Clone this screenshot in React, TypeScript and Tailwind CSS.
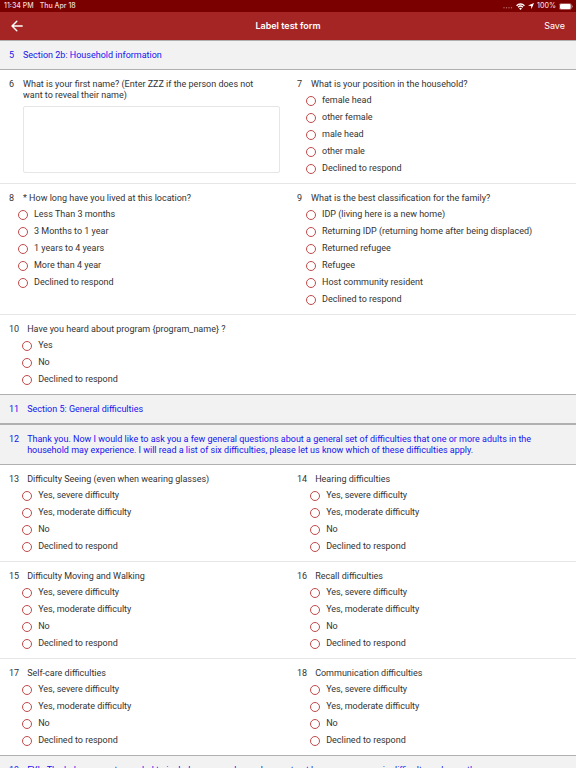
import { useId } from "react";

type Question = { n: number; title: string; options?: string[] };

const difficulty = ["Yes, severe difficulty", "Yes, moderate difficulty", "No", "Declined to respond"];

const household: Question[][] = [
  [
    { n: 6, title: "What is your first name? (Enter ZZZ if the person does not want to reveal their name)" },
    {
      n: 7,
      title: "What is your position in the household?",
      options: ["female head", "other female", "male head", "other male", "Declined to respond"],
    },
  ],
  [
    {
      n: 8,
      title: "* How long have you lived at this location?",
      options: ["Less Than 3 months", "3 Months to 1 year", "1 years to 4 years", "More than 4 year", "Declined to respond"],
    },
    {
      n: 9,
      title: "What is the best classification for the family?",
      options: [
        "IDP (living here is a new home)",
        "Returning IDP (returning home after being displaced)",
        "Returned refugee",
        "Refugee",
        "Host community resident",
        "Declined to respond",
      ],
    },
  ],
  [{ n: 10, title: "Have you heard about program {program_name} ?", options: ["Yes", "No", "Declined to respond"] }],
];

const difficulties: Question[][] = [
  [
    { n: 13, title: "Difficulty Seeing (even when wearing glasses)", options: difficulty },
    { n: 14, title: "Hearing difficulties", options: difficulty },
  ],
  [
    { n: 15, title: "Difficulty Moving and Walking", options: difficulty },
    { n: 16, title: "Recall difficulties", options: difficulty },
  ],
  [
    { n: 17, title: "Self-care difficulties", options: difficulty },
    { n: 18, title: "Communication difficulties", options: difficulty },
  ],
];

function StatusBar() {
  return (
    <div className="flex h-3 shrink-0 items-center justify-between bg-[#7a0000] pr-[3px] pl-1 text-[7px] leading-3 font-medium text-[#f0dada]">
      <div className="flex gap-[6px]">
        <span>11:34 PM</span>
        <span>Thu Apr 18</span>
      </div>
      <div className="flex items-center gap-[3px]">
        <svg width="10" height="8" viewBox="0 0 10 8" fill="#b56a6a">
          <circle cx="1" cy="5.7" r=".7" />
          <circle cx="3.500" cy="5.7" r=".7" />
          <circle cx="6" cy="5.7" r=".7" />
          <circle cx="8.500" cy="5.7" r=".7" />
        </svg>
        <svg width="9" height="7" viewBox="0 0 16 12" fill="none" stroke="#fff" strokeWidth="2.4">
          <path d="M1 4.500a10 10 0 0 1 14 0M3.800 7.300a6 6 0 0 1 8.400 0" />
          <path d="M8 12 5.500 9.400a3.500 3.500 0 0 1 5 0z" fill="#fff" stroke="none" />
        </svg>
        <svg width="6" height="6" viewBox="0 0 12 12" fill="#fff">
          <path d="M12 0 7 12 6 6 0 5z" />
        </svg>
        <span>100%</span>
        <svg width="14" height="7" viewBox="0 0 14 7">
          <rect x=".3" y=".5" width="12" height="6" rx="1.500" fill="none" stroke="#c88" strokeWidth=".6" />
          <rect x="1" y="1" width="10.700" height="5" rx="1" fill="#fff" />
          <path d="M12.900 2.300a1.300 1.300 0 0 1 0 2.400z" fill="#d9a5a5" />
        </svg>
      </div>
    </div>
  );
}

function Header() {
  return (
    <header className="grid h-7 shrink-0 grid-cols-[1fr_auto_1fr] items-center bg-[#a52424] px-[11px] text-[9px] text-white">
      <button type="button" aria-label="Back" className="justify-self-start">
        <svg width="12" height="12" viewBox="0 0 12 12" fill="none" stroke="#fff" strokeWidth="1.400" strokeLinecap="round" strokeLinejoin="round">
          <path d="M11.200 6H1M5.800 1.200 1 6l4.800 4.800" />
        </svg>
      </button>
      <h1 className="font-semibold">Label test form</h1>
      <button type="button" className="justify-self-end">
        Save
      </button>
    </header>
  );
}

function Section({ n, title }: { n: number; title: string }) {
  return (
    <h2 className="flex gap-2 border-y border-[#b0b0b0] bg-[#f2f2f2] px-[9px] pt-[9px] pb-2 text-[#1414f0]">
      <span className="min-w-[6px]">{n}</span>
      <span className="min-w-0 flex-1">{title}</span>
    </h2>
  );
}

function Field({ n, title, options }: Question) {
  const id = useId();
  if (!options) {
    return (
      <div className="flex gap-2 py-[9px] pr-2 pl-[9px]">
        <span className="min-w-[6px]">{n}</span>
        <div className="min-w-0 flex-1">
          <label htmlFor={id} className="block pr-3">
            {title}
          </label>
          <textarea id={id} className="mt-[5px] block h-[67px] w-full resize-none rounded-[2px] border border-[#e6e6e6] bg-white px-1 outline-none" />
        </div>
      </div>
    );
  }
  return (
    <fieldset className="min-w-0 pt-[9px] pr-2 pb-[6px] pl-[9px]" aria-labelledby={id}>
      <div className="flex gap-2">
        <span className="min-w-[6px]">{n}</span>
        <div className="min-w-0 flex-1">
          <div id={id}>{title}</div>
          <div className="mt-[2px] -ml-[5px]">
            {options.map((o) => (
              <label key={o} className="flex h-[17px] items-center gap-[6px]">
                <input
                  type="radio"
                  name={id}
                  className="m-0 size-[10px] shrink-0 appearance-none rounded-full border border-[#c24a4a] bg-white checked:bg-[#a52424]"
                />
                {o}
              </label>
            ))}
          </div>
        </div>
      </div>
    </fieldset>
  );
}

function Rows({ rows }: { rows: Question[][] }) {
  return (
    <div className="divide-y divide-[#e6e6e6]">
      {rows.map((row) => (
        <div key={row[0].n} className="grid grid-cols-2">
          {row.map((q) => (
            <Field key={q.n} {...q} />
          ))}
        </div>
      ))}
    </div>
  );
}

export default function App() {
  return (
    <div className="flex h-screen flex-col overflow-hidden bg-white font-['Inter','Liberation_Sans',sans-serif] text-[#333]">
      <StatusBar />
      <Header />
      <main className="min-h-0 flex-1 overflow-hidden font-['Roboto','Liberation_Sans',sans-serif] text-[9px] leading-[11px]">
        <Section n={5} title="Section 2b: Household information" />
        <Rows rows={household} />
        <Section n={11} title="Section 5: General difficulties" />
        <Section
          n={12}
          title="Thank you. Now I would like to ask you a few general questions about a general set of difficulties that one or more adults in the household may experience. I will read a list of six difficulties, please let us know which of these difficulties apply."
        />
        <Rows rows={difficulties} />
        <Section n={19} title="FYI - The help on assets needed to include any members who must not have one or more in difficulty and any other" />
      </main>
    </div>
  );
}
